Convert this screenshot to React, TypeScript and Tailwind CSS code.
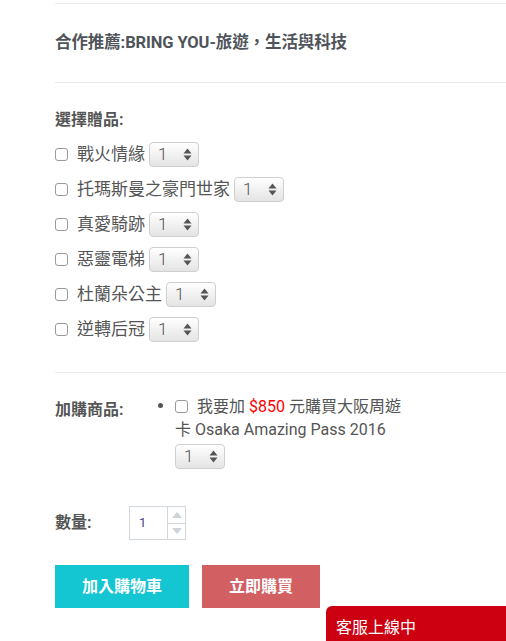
import React from "react";

const font = { fontFamily: 'Roboto, "Noto Sans CJK TC", "Noto Sans", sans-serif' };

function Box() {
  return <span className="inline-block w-[13px] h-[13px] shrink-0 rounded-[3px] border border-[#9a9a9a] bg-white" />;
}

function Sel() {
  return (
    <span className="inline-flex items-center justify-between w-[50px] h-[25px] shrink-0 rounded-[4px] border border-[#cfcfcf] bg-gradient-to-b from-[#ffffff] to-[#e4e4e4] pl-[8px] pr-[6px] text-[17px] font-light text-[#555]">
      <span className="leading-none">1</span>
      <svg width="9" height="13" viewBox="0 0 9 13">
        <path d="M4.5 0.5 L8.5 5.5 L0.5 5.5 Z" fill="#555" />
        <path d="M0.5 7.5 L8.5 7.5 L4.5 12.5 Z" fill="#555" />
      </svg>
    </span>
  );
}

const gifts = ["戰火情緣", "托瑪斯曼之豪門世家", "真愛騎跡", "惡靈電梯", "杜蘭朵公主", "逆轉后冠"];

export default function App() {
  return (
    <div className="relative w-[506px] h-[641px] overflow-hidden bg-white text-[#555]" style={font}>
      <div className="pl-[55px]">
        <div className="mt-[3px] border-t border-[#e8e8e8]" />
        <div className="h-[78px] flex items-center">
          <h2 className="text-[16.5px] font-bold text-[#4f545a] tracking-[-0.1px]">合作推薦:BRING YOU-旅遊，生活與科技</h2>
        </div>
        <div className="border-t border-[#e8e8e8]" />

        <div className="pt-[25px] pb-[30px]">
          <div className="text-[16px] font-bold leading-[24px] text-[#555]">選擇贈品:</div>
          <div className="mt-[10px] flex flex-col gap-[10px]">
            {gifts.map((g) => (
              <div key={g} className="flex items-center h-[25px]">
                <Box />
                <span className="ml-[9px] mr-[4px] text-[17px] leading-[25px] text-[#555]">{g}</span>
                <Sel />
              </div>
            ))}
          </div>
        </div>
        <div className="border-t border-[#e8e8e8]" />

        <div className="pt-[22px] flex">
          <div className="w-[100px] pt-[3px] text-[16px] font-bold leading-[24px]">加購商品:</div>
          <div className="w-[10px] flex justify-center pt-[8px]">
            <span className="w-[5px] h-[5px] rounded-full bg-[#555]" />
          </div>
          <div className="ml-[10px] text-[16px] leading-[23px] text-[#555]">
            <div className="flex items-center whitespace-nowrap">
              <Box />
              <span className="ml-[9px]">
                我要加 <span className="text-[#f00]">$850</span> 元購買大阪周遊
              </span>
            </div>
            <div className="whitespace-nowrap">卡 Osaka Amazing Pass 2016</div>
            <div className="mt-[3px]">
              <Sel />
            </div>
          </div>
        </div>

        <div className="mt-[37px] flex items-center">
          <div className="w-[74px] text-[16px] font-bold text-[#555]">數量:</div>
          <div className="flex w-[57px] h-[34px] border border-[#d3d8de] bg-white">
            <div className="flex-1 flex items-center pl-[9px] text-[13px] text-[#4a3f86]">1</div>
            <div className="w-[18px] flex flex-col border-l border-[#d3d8de]">
              <div className="flex-1 flex items-center justify-center border-b border-[#d3d8de]">
                <svg width="10" height="6" viewBox="0 0 10 6"><path d="M5 0 L10 6 L0 6 Z" fill="#cfd4da" /></svg>
              </div>
              <div className="flex-1 flex items-center justify-center">
                <svg width="10" height="6" viewBox="0 0 10 6"><path d="M0 0 L10 0 L5 6 Z" fill="#cfd4da" /></svg>
              </div>
            </div>
          </div>
        </div>

        <div className="mt-[25px] flex gap-[13px]">
          <button className="w-[134px] h-[43px] bg-[#13c6d2] text-white text-[16px] font-bold">加入購物車</button>
          <button className="w-[118px] h-[43px] bg-[#d26063] text-white text-[16px] font-bold">立即購買</button>
        </div>
      </div>

      <div className="absolute right-0 bottom-0 w-[180px] h-[35px] rounded-tl-[6px] bg-[#cc0011] pl-[10px] pt-[9px] text-[16px] leading-[26px] text-white">
        客服上線中
      </div>
    </div>
  );
}
